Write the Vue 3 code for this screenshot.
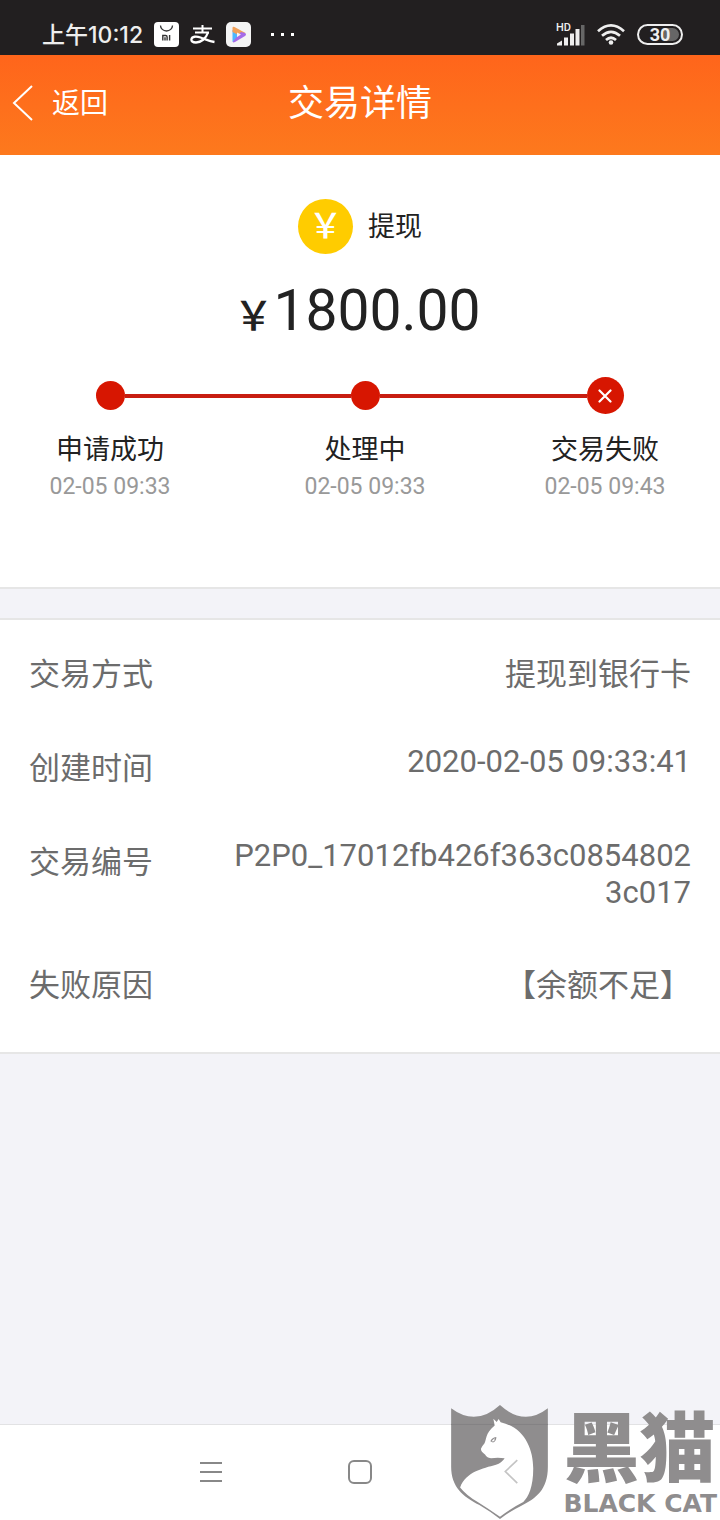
<script setup>
const steps = [
  { label: '申请成功', time: '02-05 09:33', failed: false },
  { label: '处理中', time: '02-05 09:33', failed: false },
  { label: '交易失败', time: '02-05 09:43', failed: true },
]

const details = [
  { label: '交易方式', value: '提现到银行卡' },
  { label: '创建时间', value: '2020-02-05 09:33:41' },
  { label: '交易编号', value: 'P2P0_17012fb426f363c08548023c017' },
  { label: '失败原因', value: '【余额不足】' },
]
</script>

<template>
  <div class="page">
    <div class="status-bar">
      <div class="status-left">
        <span class="clock">上午10:12</span>
        <svg class="app-icon" viewBox="0 0 25 25" aria-hidden="true">
          <rect width="25" height="25" rx="4" fill="#fff" />
          <path d="M6.500 3.500a6 5.500 0 0 0 12 0" fill="none" stroke="#333" stroke-width="1.300" />
          <path d="M8.800 18.500v-5h2.800q1.500 0 1.500 1.500v3.500M11 18.500v-3.200M15.600 13v5.500" fill="none" stroke="#333" stroke-width="1.400" />
        </svg>
        <svg class="app-icon" viewBox="0 0 25 25" fill="none" stroke="#fff" aria-hidden="true">
          <path d="M3 6.500h19M12.500 3v7M5 10.500h14" stroke-width="2" />
          <path d="M18 10.500c-2 6-7 10-12 10-3.500 0-5-1.500-4.500-3.500.6-2.500 4.500-3 9-1.500 5 1.700 9 3.700 14 4.500" stroke-width="2.300" />
        </svg>
        <svg class="app-icon" viewBox="0 0 25 25" aria-hidden="true">
          <rect width="25" height="25" rx="5" fill="#f4f4f4" />
          <path d="M6.500 8h4.500v8l-4.500 4z" fill="#4cb6ff" />
          <path d="M6.500 6q0-2 2-1l11 6-3 4-10-5z" fill="#f0a058" />
          <path d="M6.800 19.500L15 10l4 1q2 1.500 0 3l-10 6q-2 1-2.200-.5z" fill="#a56be8" />
          <path d="M11 10.500l4 2-4 2.500z" fill="#f4f4f4" />
        </svg>
        <svg class="more-icon" viewBox="0 0 26 6" fill="#fff" aria-hidden="true">
          <path d="M1 1h3v3H1zM11 1h3v3h-3zM21 1h3v3h-3z" />
        </svg>
      </div>
      <div class="status-right">
        <div class="signal">
          <span class="hd">HD</span>
          <svg viewBox="0 0 29 22" aria-hidden="true">
            <path d="M1 21.500v-2l5-3v5zM8 13.500h4v8H8zM14 9.500h4v12h-4zM19.500 5h4v16.500h-4z" fill="#eee" />
            <path d="M25 1h3.500v20.500H25z" fill="#666" />
          </svg>
        </div>
        <svg class="wifi" viewBox="0 0 28 21" fill="none" stroke="#eee" stroke-width="2.700" aria-hidden="true">
          <path d="M1 7.200q13-11.500 26 0M5 11.800q9-8 18 0M9 16q5-4.500 10 0" />
          <circle cx="14" cy="18.500" r="2.300" fill="#eee" stroke="none" />
        </svg>
        <span class="battery"><span class="battery-level">30</span></span>
      </div>
    </div>

    <header class="header">
      <button class="back" type="button">
        <svg viewBox="0 0 22 38" fill="none" stroke="#fff" stroke-width="2" aria-hidden="true">
          <path d="M20 1L2 18l18 17" />
        </svg>
        <span>返回</span>
      </button>
      <h1 class="title">交易详情</h1>
    </header>

    <main>
      <section class="summary">
        <div class="type">
          <span class="coin">￥</span>
          <span>提现</span>
        </div>
        <p class="amount"><span class="currency">￥</span>1800.00</p>
        <ol class="steps">
          <li v-for="step in steps" :key="step.label" class="step">
            <div class="marker">
              <span class="dot" :class="{ failed: step.failed }">
                <svg v-if="step.failed" viewBox="0 0 14 14" stroke="#fff" stroke-width="2.200" stroke-linecap="round" aria-hidden="true">
                  <path d="M1.500 1.500l11 11M12.500 1.500l-11 11" />
                </svg>
              </span>
            </div>
            <span class="step-label">{{ step.label }}</span>
            <time class="step-time">{{ step.time }}</time>
          </li>
        </ol>
      </section>

      <dl class="details">
        <div v-for="item in details" :key="item.label" class="row">
          <dt>{{ item.label }}</dt>
          <dd>{{ item.value }}</dd>
        </div>
      </dl>
    </main>

    <nav class="nav-bar">
      <button type="button" aria-label="菜单">
        <svg viewBox="0 0 26 26"><path d="M2 3h22M2 12h22M2 21h22" /></svg>
      </button>
      <button type="button" aria-label="主页">
        <svg viewBox="0 0 26 26"><rect x="2" y="1" width="22" height="22" rx="5" /></svg>
      </button>
      <button type="button" aria-label="返回">
        <svg viewBox="0 0 26 26"><path d="M19 1L8 12l11 11" /></svg>
      </button>
    </nav>

    <div class="watermark">
      <svg class="shield" viewBox="15 14 291 343" aria-hidden="true">
        <path d="M15 24Q90 80 162 14 234 80 306 24V200C306 270 270 295 225 318Q190 335 162 357 134 335 100 315C50 290 15 260 15 200Z" fill="#8f8d8e" />
        <path d="M15 72.500h291" stroke="#848284" stroke-width="3" />
        <path d="M142 55L152 65 158 56 164 66C235 82 262 145 262 205 262 260 248 290 232 306Q195 325 162 350 125 325 95 306 60 285 42 262C60 215 110 205 150 194Q167 188 176 174 155 172 135 174C125 174 120 168 117 163Q103 152 105 145 108 138 115 130C122 120 116 100 146 76Z" fill="#fff" />
        <path d="M133 123Q136 112 151 110 151 123 141 127Z" fill="#8f8d8e" />
        <path d="M137 122L146 113 145 122 140 124Z" fill="#fff" />
        <path d="M214 180L178 214 214 249" fill="none" stroke="#c4c4c4" stroke-width="5" />
      </svg>
      <div class="brand">
        <span class="brand-cn">黑猫</span>
        <span class="brand-en">BLACK CAT</span>
      </div>
    </div>
  </div>
</template>

<style>
body {
  margin: 0;
  background: #f3f3f8;
}
</style>

<style scoped>
.page {
  position: relative;
  min-height: 100vh;
  display: flex;
  flex-direction: column;
  font-family: Roboto, "Noto Sans CJK SC", sans-serif;
  color: #222;
}

button {
  padding: 0;
  border: 0;
  background: none;
  font: inherit;
  color: inherit;
}

.status-bar {
  height: 55px;
  padding: 14px 37px 0 42px;
  box-sizing: border-box;
  display: flex;
  align-items: center;
  justify-content: space-between;
  background: #221f20;
  color: #eee;
}

.status-left,
.status-right {
  display: flex;
  align-items: center;
  gap: 12px;
}

.status-left {
  gap: 11px;
}

.clock {
  font-family: Inter, "Noto Sans CJK SC", sans-serif;
  font-size: 23px;
  font-weight: 500;
  line-height: 28px;
}

.app-icon {
  width: 25px;
  height: 25px;
}

.more-icon {
  width: 26px;
  height: 6px;
  margin-left: 8px;
}

.signal {
  position: relative;
  display: flex;
}

.signal svg {
  width: 29px;
  height: 22px;
}

.hd {
  position: absolute;
  top: 0;
  left: 0;
  font-size: 11px;
  font-weight: 500;
  line-height: 8px;
}

.wifi {
  width: 28px;
  height: 21px;
}

.battery {
  width: 46px;
  height: 21px;
  padding: 2px;
  box-sizing: border-box;
  display: flex;
  border: 2px solid #eee;
  border-radius: 11px;
}

.battery-level {
  flex: 1;
  border-radius: 8px;
  background: linear-gradient(90deg, #221f20 60%, #666 60%);
  font-size: 18px;
  font-weight: 700;
  line-height: 14px;
  text-align: center;
}

.header {
  height: 100px;
  padding: 0 12px 2px;
  box-sizing: border-box;
  display: grid;
  grid-template-columns: 1fr auto 1fr;
  align-items: center;
  background: linear-gradient(180deg, #ff651b, #fd791d);
  color: #fff;
}

.back {
  display: flex;
  align-items: center;
  gap: 18px;
  font-size: 28px;
  line-height: 40px;
}

.back svg {
  width: 22px;
  height: 38px;
}

.title {
  margin: 0;
  font-size: 36px;
  font-weight: 400;
  line-height: 52px;
}

.summary {
  height: 434px;
  padding-top: 44px;
  box-sizing: border-box;
  border-bottom: 2px solid #e6e6e6;
  background: #fff;
}

.type {
  display: flex;
  align-items: center;
  justify-content: center;
  gap: 15px;
  font-size: 27px;
  line-height: 44px;
}

.coin {
  width: 55px;
  height: 55px;
  border-radius: 50%;
  background: #fc0;
  color: #fff;
  font-size: 34px;
  font-weight: 500;
  line-height: 55px;
  text-align: center;
}

.amount {
  margin: 22px 0 0;
  padding-right: 6px;
  font-size: 57px;
  line-height: 70px;
  text-align: center;
}

.currency {
  font-size: 40px;
  font-weight: 500;
  line-height: 40px;
}

.steps {
  margin: 31px 0 0;
  padding: 0 20px 0 0;
  display: grid;
  grid-template-columns: 22fr 29fr 19fr;
  list-style: none;
}

.step {
  display: flex;
  flex-direction: column;
  align-items: center;
}

.marker {
  width: 100%;
  height: 37px;
  display: flex;
  align-items: center;
}

.marker::before,
.marker::after {
  content: "";
  flex: 1;
  height: 4px;
  background: #c81d11;
}

.step:first-child .marker::before,
.step:last-child .marker::after {
  background: none;
}

.dot {
  width: 29px;
  height: 29px;
  display: flex;
  align-items: center;
  justify-content: center;
  border-radius: 50%;
  background: #d71601;
}

.dot.failed {
  width: 37px;
  height: 37px;
}

.dot svg {
  width: 14px;
  height: 14px;
}

.step-label {
  margin-top: 16px;
  font-size: 27px;
  line-height: 40px;
}

.step-time {
  color: #999;
  font-size: 23px;
  line-height: 34px;
}

.details {
  margin: 29px 0 0;
  padding: 29px 29px 47px;
  display: flex;
  flex-direction: column;
  gap: 49px;
  border-top: 2px solid #e6e6e6;
  border-bottom: 2px solid #e6e6e6;
  background: #fff;
  color: #6c6c6c;
  font-size: 31px;
}

.row {
  display: flex;
  align-items: flex-start;
  justify-content: space-between;
}

.row dd {
  max-width: 69%;
  margin: 0;
  text-align: right;
  word-break: break-all;
}

.nav-bar {
  height: 96px;
  margin-top: auto;
  box-sizing: border-box;
  display: flex;
  align-items: center;
  justify-content: center;
  gap: 123px;
  border-top: 1px solid #e2e2e4;
  background: #fff;
}

.nav-bar button {
  display: flex;
}

.nav-bar svg {
  width: 26px;
  height: 26px;
  fill: none;
  stroke: #888;
  stroke-width: 2;
}

/* brand mark floating over the navigation bar */
.watermark {
  position: absolute;
  right: 3px;
  bottom: 1px;
  display: flex;
  align-items: flex-end;
  gap: 15px;
  color: #8f8d8e;
  pointer-events: none;
}

.shield {
  width: 97px;
  height: 114px;
}

.brand {
  display: flex;
  flex-direction: column;
}

.brand-cn {
  margin-bottom: 4px;
  font-family: "Noto Sans CJK SC", sans-serif;
  font-size: 76px;
  font-weight: 900;
  line-height: 84px;
}

.brand-en {
  font-family: "DejaVu Sans", sans-serif;
  font-size: 25px;
  font-weight: 700;
  line-height: 30px;
}
</style>
